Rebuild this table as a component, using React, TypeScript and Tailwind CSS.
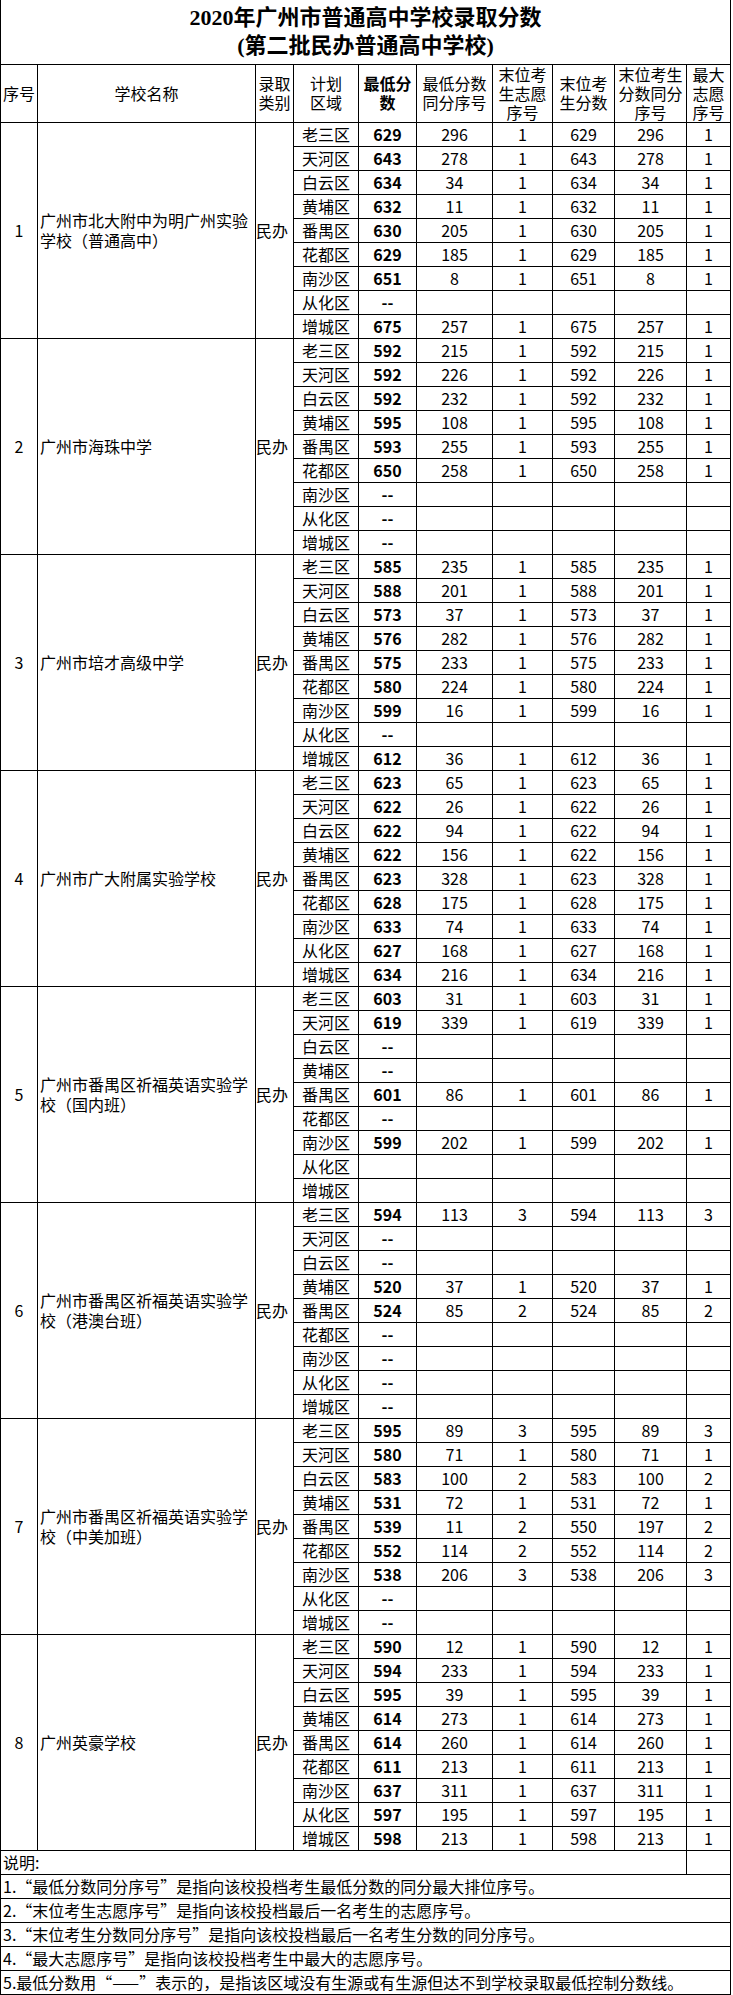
type Row = [string, string?, string?, string?, string?, string?, string?];

type School = { no: number; name: string; rows: Row[] };

const schools: School[] = [
  {
    no: 1,
    name: '广州市北大附中为明广州实验学校（普通高中）',
    rows: [
      ['老三区', '629', '296', '1', '629', '296', '1'],
      ['天河区', '643', '278', '1', '643', '278', '1'],
      ['白云区', '634', '34', '1', '634', '34', '1'],
      ['黄埔区', '632', '11', '1', '632', '11', '1'],
      ['番禺区', '630', '205', '1', '630', '205', '1'],
      ['花都区', '629', '185', '1', '629', '185', '1'],
      ['南沙区', '651', '8', '1', '651', '8', '1'],
      ['从化区', '--'],
      ['增城区', '675', '257', '1', '675', '257', '1'],
    ],
  },
  {
    no: 2,
    name: '广州市海珠中学',
    rows: [
      ['老三区', '592', '215', '1', '592', '215', '1'],
      ['天河区', '592', '226', '1', '592', '226', '1'],
      ['白云区', '592', '232', '1', '592', '232', '1'],
      ['黄埔区', '595', '108', '1', '595', '108', '1'],
      ['番禺区', '593', '255', '1', '593', '255', '1'],
      ['花都区', '650', '258', '1', '650', '258', '1'],
      ['南沙区', '--'],
      ['从化区', '--'],
      ['增城区', '--'],
    ],
  },
  {
    no: 3,
    name: '广州市培才高级中学',
    rows: [
      ['老三区', '585', '235', '1', '585', '235', '1'],
      ['天河区', '588', '201', '1', '588', '201', '1'],
      ['白云区', '573', '37', '1', '573', '37', '1'],
      ['黄埔区', '576', '282', '1', '576', '282', '1'],
      ['番禺区', '575', '233', '1', '575', '233', '1'],
      ['花都区', '580', '224', '1', '580', '224', '1'],
      ['南沙区', '599', '16', '1', '599', '16', '1'],
      ['从化区', '--'],
      ['增城区', '612', '36', '1', '612', '36', '1'],
    ],
  },
  {
    no: 4,
    name: '广州市广大附属实验学校',
    rows: [
      ['老三区', '623', '65', '1', '623', '65', '1'],
      ['天河区', '622', '26', '1', '622', '26', '1'],
      ['白云区', '622', '94', '1', '622', '94', '1'],
      ['黄埔区', '622', '156', '1', '622', '156', '1'],
      ['番禺区', '623', '328', '1', '623', '328', '1'],
      ['花都区', '628', '175', '1', '628', '175', '1'],
      ['南沙区', '633', '74', '1', '633', '74', '1'],
      ['从化区', '627', '168', '1', '627', '168', '1'],
      ['增城区', '634', '216', '1', '634', '216', '1'],
    ],
  },
  {
    no: 5,
    name: '广州市番禺区祈福英语实验学校（国内班）',
    rows: [
      ['老三区', '603', '31', '1', '603', '31', '1'],
      ['天河区', '619', '339', '1', '619', '339', '1'],
      ['白云区', '--'],
      ['黄埔区', '--'],
      ['番禺区', '601', '86', '1', '601', '86', '1'],
      ['花都区', '--'],
      ['南沙区', '599', '202', '1', '599', '202', '1'],
      ['从化区'],
      ['增城区'],
    ],
  },
  {
    no: 6,
    name: '广州市番禺区祈福英语实验学校（港澳台班）',
    rows: [
      ['老三区', '594', '113', '3', '594', '113', '3'],
      ['天河区', '--'],
      ['白云区', '--'],
      ['黄埔区', '520', '37', '1', '520', '37', '1'],
      ['番禺区', '524', '85', '2', '524', '85', '2'],
      ['花都区', '--'],
      ['南沙区', '--'],
      ['从化区', '--'],
      ['增城区', '--'],
    ],
  },
  {
    no: 7,
    name: '广州市番禺区祈福英语实验学校（中美加班）',
    rows: [
      ['老三区', '595', '89', '3', '595', '89', '3'],
      ['天河区', '580', '71', '1', '580', '71', '1'],
      ['白云区', '583', '100', '2', '583', '100', '2'],
      ['黄埔区', '531', '72', '1', '531', '72', '1'],
      ['番禺区', '539', '11', '2', '550', '197', '2'],
      ['花都区', '552', '114', '2', '552', '114', '2'],
      ['南沙区', '538', '206', '3', '538', '206', '3'],
      ['从化区', '--'],
      ['增城区', '--'],
    ],
  },
  {
    no: 8,
    name: '广州英豪学校',
    rows: [
      ['老三区', '590', '12', '1', '590', '12', '1'],
      ['天河区', '594', '233', '1', '594', '233', '1'],
      ['白云区', '595', '39', '1', '595', '39', '1'],
      ['黄埔区', '614', '273', '1', '614', '273', '1'],
      ['番禺区', '614', '260', '1', '614', '260', '1'],
      ['花都区', '611', '213', '1', '611', '213', '1'],
      ['南沙区', '637', '311', '1', '637', '311', '1'],
      ['从化区', '597', '195', '1', '597', '195', '1'],
      ['增城区', '598', '213', '1', '598', '213', '1'],
    ],
  },
];

const notes = [
  '1.“最低分数同分序号”是指向该校投档考生最低分数的同分最大排位序号。',
  '2.“末位考生志愿序号”是指向该校投档最后一名考生的志愿序号。',
  '3.“末位考生分数同分序号”是指向该校投档最后一名考生分数的同分序号。',
  '4.“最大志愿序号”是指向该校投档考生中最大的志愿序号。',
  '5.最低分数用“——”表示的，是指该区域没有生源或有生源但达不到学校录取最低控制分数线。',
];

const cell = 'border border-black p-0 h-[24px] text-center align-middle';

export default function App() {
  return (
    <div className="bg-white text-black font-['Noto_Sans_CJK_SC',sans-serif] text-[16px] leading-[20px]">
      <table className="table-fixed border-collapse w-[731px]">
        <colgroup>
          <col className="w-[37px]" />
          <col className="w-[218px]" />
          <col className="w-[38px]" />
          <col className="w-[65px]" />
          <col className="w-[58px]" />
          <col className="w-[76px]" />
          <col className="w-[60px]" />
          <col className="w-[62px]" />
          <col className="w-[72px]" />
          <col className="w-[44px]" />
        </colgroup>
        <tbody>
          {/* Title */}
          <tr>
            <td
              colSpan={10}
              className="border border-black border-t-0 h-[64px] p-0 text-center align-middle font-bold text-[22px] leading-[28px] font-['Liberation_Serif','Noto_Sans_CJK_SC',serif]"
            >
              <div>2020年广州市普通高中学校录取分数</div>
              <div>(第二批民办普通高中学校)</div>
            </td>
          </tr>

          {/* Header */}
          <tr className="leading-[19px]">
            <td className="border border-black p-0 h-[58px] text-center">序号</td>
            <td className="border border-black p-0 text-center">学校名称</td>
            <td className="border border-black p-0 text-center">
              录取
              <br />
              类别
            </td>
            <td className="border border-black p-0 text-center">
              计划
              <br />
              区域
            </td>
            <td className="border border-black p-0 text-center font-bold">
              最低分
              <br />
              数
            </td>
            <td className="border border-black p-0 text-center">
              最低分数
              <br />
              同分序号
            </td>
            <td className="border border-black p-0 text-center">
              末位考
              <br />
              生志愿
              <br />
              序号
            </td>
            <td className="border border-black p-0 text-center">
              末位考
              <br />
              生分数
            </td>
            <td className="border border-black p-0 text-center">
              末位考生
              <br />
              分数同分
              <br />
              序号
            </td>
            <td className="border border-black p-0 text-center">
              最大
              <br />
              志愿
              <br />
              序号
            </td>
          </tr>

          {/* Data */}
          {schools.map((s) =>
            s.rows.map((r, i) => (
              <tr key={`${s.no}-${i}`}>
                {i === 0 && (
                  <>
                    <td rowSpan={9} className="border border-black p-0 text-center align-middle">
                      {s.no}
                    </td>
                    <td rowSpan={9} className="border border-black p-0 pl-[2px] text-left align-middle">
                      {s.name}
                    </td>
                    <td rowSpan={9} className="border border-black p-0 text-left align-middle">
                      民办
                    </td>
                  </>
                )}
                <td className={cell}>{r[0]}</td>
                <td className={`${cell} font-bold`}>{r[1] ?? ''}</td>
                <td className={cell}>{r[2] ?? ''}</td>
                <td className={cell}>{r[3] ?? ''}</td>
                <td className={cell}>{r[4] ?? ''}</td>
                <td className={cell}>{r[5] ?? ''}</td>
                <td className={cell}>{r[6] ?? ''}</td>
              </tr>
            ))
          )}

          {/* Notes */}
          <tr>
            <td colSpan={9} className="border border-black p-0 pl-[2px] h-[24px] text-left align-middle">
              说明:
            </td>
            <td className="border border-black p-0"></td>
          </tr>
          {notes.map((n) => (
            <tr key={n}>
              <td colSpan={10} className="border border-black p-0 pl-[2px] h-[24px] text-left align-middle whitespace-nowrap">
                {n}
              </td>
            </tr>
          ))}
        </tbody>
      </table>
    </div>
  );
}
